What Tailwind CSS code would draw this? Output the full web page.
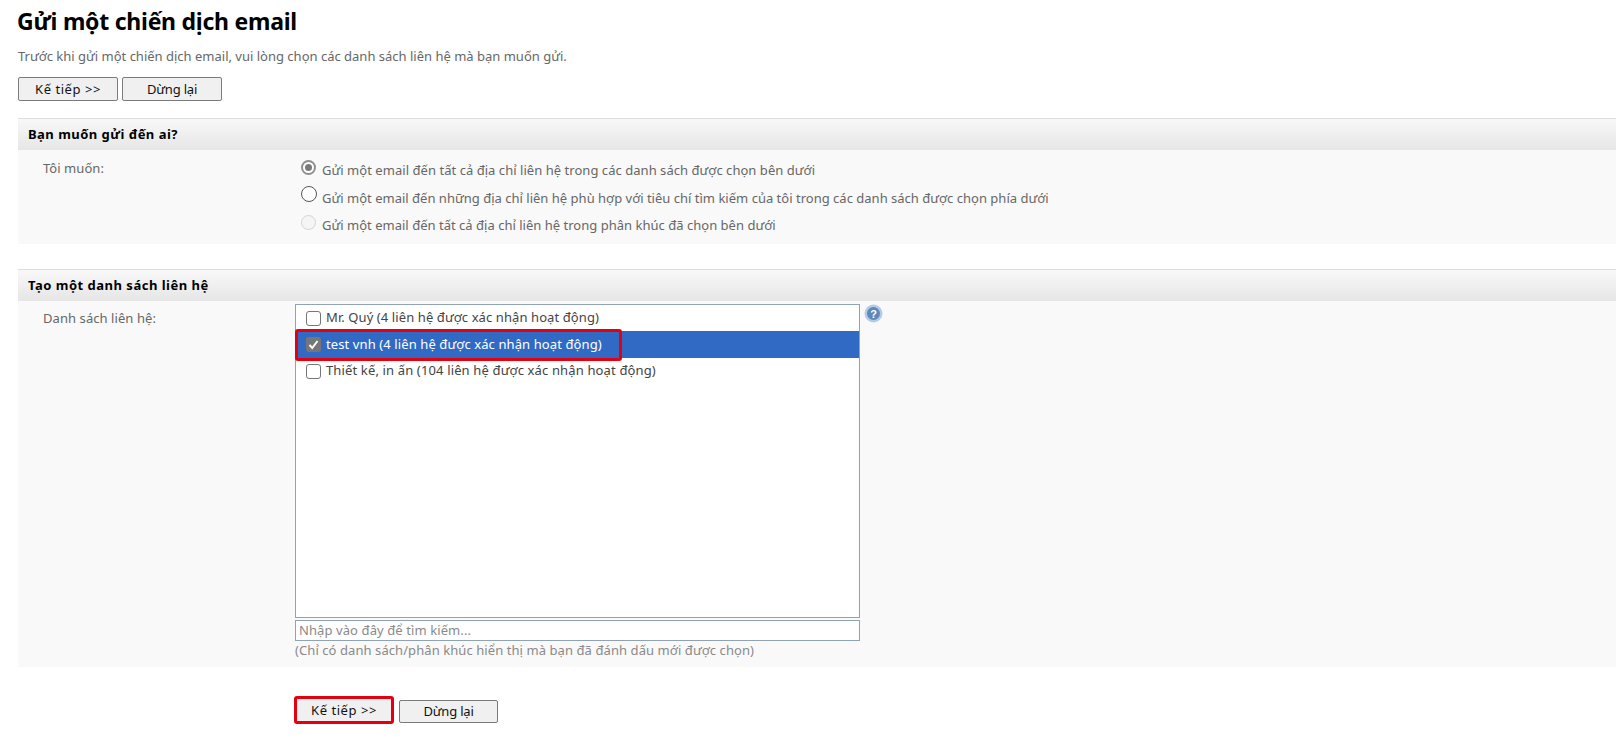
<!DOCTYPE html>
<html lang="vi">
<head>
<meta charset="utf-8">
<script src="https://cdn.jsdelivr.net/npm/@tailwindcss/browser@4"></script>
</head>
<body class="bg-white h-[750px] overflow-hidden font-['Noto_Sans','DejaVu_Sans',sans-serif] text-[13px] text-[#676767]">
<div class="pl-[18px]">
  <h1 class="h-[46px] pt-[4px] -ml-[1px] text-[23px] leading-[34px] font-bold text-black tracking-[-0.25px]">Gửi một chiến dịch email</h1>
  <p class="h-[20px] leading-[20px]">Trước khi gửi một chiến dịch email, vui lòng chọn các danh sách liên hệ mà bạn muốn gửi.</p>
  <div class="mt-[11px] flex gap-[4px]">
    <button class="w-[100px] h-[24px] border border-[#7a7a7a] rounded-[2px] bg-[#f0f0f0] text-[#111] leading-[22px] tracking-[0.55px]">Kế tiếp &gt;&gt;</button>
    <button class="w-[100px] h-[24px] border border-[#7a7a7a] rounded-[2px] bg-[#f0f0f0] text-[#111] leading-[22px] tracking-[-0.2px]">Dừng lại</button>
  </div>
  <section class="mt-[17px]">
    <h2 class="h-[32px] border-t border-[#dedede] bg-gradient-to-b from-[#f8f8f8] to-[#e6e6e6] pl-[10px] leading-[31px] font-bold text-black tracking-[0.47px]">Bạn muốn gửi đến ai?</h2>
    <div class="h-[94px] bg-[#f9f9f9] flex">
      <div class="w-[277px] pl-[25px] pt-[8px] leading-[20px] tracking-[0.05px]">Tôi muốn:</div>
      <div class="flex flex-col pt-[10px] pl-[6px]">
        <label class="h-[28px] flex items-start gap-[6px] leading-[20px] tracking-[0.04px]"><span class="w-[15px] h-[15px] rounded-full border-2 border-[#8f8f8f] bg-white flex items-center justify-center"><span class="w-[7px] h-[7px] rounded-full bg-[#7a7a7a]"></span></span>Gửi một email đến tất cả địa chỉ liên hệ trong các danh sách được chọn bên dưới</label>
        <label class="h-[27px] flex items-start gap-[5px] leading-[20px] tracking-[0.01px]"><span class="-mt-[2px] w-[16px] h-[16px] rounded-full border-[1.5px] border-[#555] bg-white"></span>Gửi một email đến những địa chỉ liên hệ phù hợp với tiêu chí tìm kiếm của tôi trong các danh sách được chọn phía dưới</label>
        <label class="h-[27px] flex items-start gap-[6px] leading-[20px] tracking-[0.015px]"><span class="w-[15px] h-[15px] rounded-full border-[1.5px] border-[#d4d4d4] bg-[#f5f5f5]"></span>Gửi một email đến tất cả địa chỉ liên hệ trong phân khúc đã chọn bên dưới</label>
      </div>
    </div>
  </section>
  <section class="mt-[25px]">
    <h2 class="h-[32px] border-t border-[#dedede] bg-gradient-to-b from-[#f8f8f8] to-[#e6e6e6] pl-[10px] leading-[31px] font-bold text-black tracking-[0.5px]">Tạo một danh sách liên hệ</h2>
    <div class="h-[366px] bg-[#f9f9f9] flex">
      <div class="w-[277px] pl-[25px] pt-[7px] leading-[20px] tracking-[0.07px]">Danh sách liên hệ:</div>
      <div class="w-[565px] pt-[3px]">
        <div class="relative h-[314px] border border-[#8fa3b5] bg-white text-[#444]">
          <div class="h-[26px] pl-[10px] flex items-center gap-[5px] tracking-[0.09px]"><span class="w-[15px] h-[15px] rounded-[3px] border border-[#767676] bg-white"></span>Mr. Quý (4 liên hệ được xác nhận hoạt động)</div>
          <div class="h-[27px] pl-[10px] flex items-center gap-[5px] bg-[#316ac5] text-white tracking-[0.1px]"><span class="w-[15px] h-[15px] rounded-[3px] bg-[#767676] flex items-center justify-center"><svg width="11" height="11" viewBox="0 0 11 11" fill="none"><path d="M1.5 6 L4.2 9 L9.5 2" stroke="#fff" stroke-width="2"/></svg></span>test vnh (4 liên hệ được xác nhận hoạt động)</div>
          <div class="h-[26px] pl-[10px] flex items-center gap-[5px] tracking-[0.14px]"><span class="w-[15px] h-[15px] rounded-[3px] border border-[#767676] bg-white"></span>Thiết kế, in ấn (104 liên hệ được xác nhận hoạt động)</div>
          <div class="absolute left-[-1px] top-[24px] w-[327px] h-[32px] border-[3px] border-[#e5000f] rounded-[3px]"></div>
        </div>
        <div class="mt-[2px] h-[21px] border border-[#8fa3b5] bg-white pl-[3px] leading-[19px] text-[#8a8a8a] tracking-[0.09px]">Nhập vào đây để tìm kiếm...</div>
        <div class="h-[19px] leading-[19px] text-[#8a8a8a] tracking-[0.075px]">(Chỉ có danh sách/phân khúc hiển thị mà bạn đã đánh dấu mới được chọn)</div>
      </div>
      <svg class="ml-[4px] mt-[3px]" width="19" height="19" viewBox="0 0 19 19"><circle cx="9.5" cy="9.5" r="9" fill="#b4cbe6"/><circle cx="9.5" cy="9.5" r="6.5" fill="#5f87b8"/><text x="9.5" y="13.5" text-anchor="middle" font-size="11" font-weight="700" fill="#fff" font-family="Liberation Sans">?</text></svg>
    </div>
  </section>
  <div class="pl-[276px] mt-[29px] flex items-start gap-[5px]">
    <button class="w-[100px] h-[28px] border-[3px] border-[#e5000f] rounded-[3px] bg-[#f0f0f0] text-[#111] leading-[22px] tracking-[0.55px]">Kế tiếp &gt;&gt;</button>
    <button class="mt-[4px] w-[99px] h-[23px] border border-[#7a7a7a] rounded-[2px] bg-[#f0f0f0] text-[#111] leading-[21px] tracking-[-0.2px]">Dừng lại</button>
  </div>
</div>
</body>
</html>
